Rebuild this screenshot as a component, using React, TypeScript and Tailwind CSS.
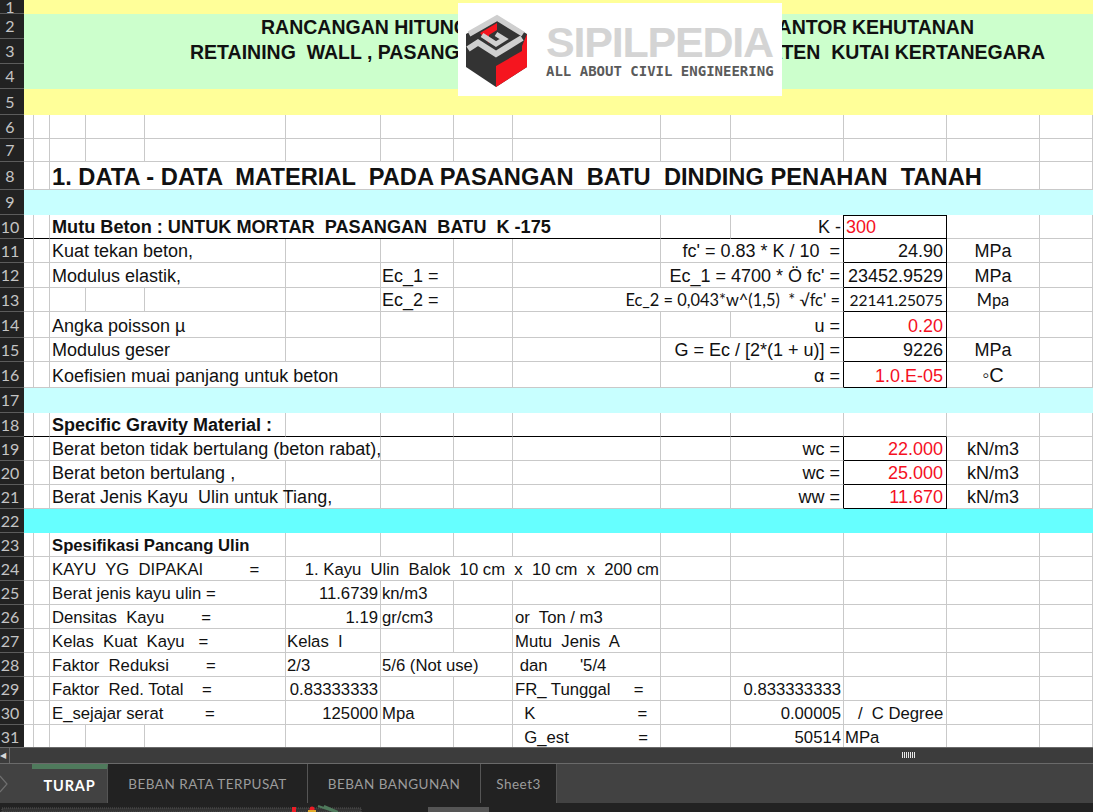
import React from 'react';
import { twMerge } from 'tailwind-merge';

type Cell = [number, string?, string?];

const SPAN: Record<number, string> = {
  1: 'col-span-1', 2: 'col-span-2', 3: 'col-span-3', 4: 'col-span-4', 5: 'col-span-5',
  7: 'col-span-7', 11: 'col-span-11', 12: 'col-span-12', 14: 'col-span-14',
};

const blank = (n: number): Cell[] => Array.from({ length: n }, (): Cell => [1]);

// L column holds the boxed input values
const R = 'justify-end pr-[2px]';
const RED = 'text-[#f5101f]';
const BOX = 'border-r-black border-b-black pr-[3px]';
const UNIT = 'justify-center';
const SM = 'text-[16.7px] leading-[18px]';
const LEFT = 'pl-[2px]';
const KEY = 'justify-end border-r-black pr-[3px]';
const CAL = "font-['Lato',sans-serif]";
const BAND = 'border-transparent';
const UNDER = 'border-b-black';

const boxL = (text: string, cls = ''): Cell => [1, text, `justify-end ${BOX} ${cls}`];
const keyK = (text: string): Cell => [1, text, KEY];

const ROWS: Cell[][] = [
  [[14, '', `bg-[#ffff99] ${BAND}`]],
  [[14, '', `bg-[#ccffcc] ${BAND}`]],
  [[14, '', `bg-[#ccffcc] ${BAND}`]],
  [[14, '', `bg-[#ccffcc] ${BAND}`]],
  [[14, '', `bg-[#ffff99] ${BAND}`]],
  blank(14),
  blank(14),
  [[1], [1], [11, '1. DATA - DATA  MATERIAL  PADA PASANGAN  BATU  DINDING PENAHAN  TANAH', `text-[23.7px] leading-[22px] font-bold ${LEFT}`], [1]],
  [[14, '', `bg-[#c8ffff] ${BAND}`]],
  // row 10
  [
    [1, '', UNDER], [1, '', UNDER],
    [7, 'Mutu Beton : UNTUK MORTAR  PASANGAN  BATU  K -175', `text-[18.15px] leading-[20px] font-bold ${LEFT} ${UNDER}`],
    [1, '', UNDER],
    [1, 'K -', `${R} ${UNDER} border-r-black`],
    [1, '300', `${LEFT} border-t border-t-black border-r-black ${UNDER} ${RED}`],
    [1], [1],
  ],
  [[1], [1], [3, 'Kuat tekan beton,', LEFT], [1], [1], [1], [1], [2, "fc' = 0.83 * K / 10  =", KEY], boxL('24.90'), [1, 'MPa', UNIT], [1]],
  [[1], [1], [3, 'Modulus elastik,', LEFT], [1], [1, 'Ec_1 =', 'pl-[1px]'], [1], [1], [2, "Ec_1 = 4700 * Ö fc' =", KEY], boxL('23452.9529'), [1, 'MPa', UNIT], [1]],
  [[1], [1], [1], [1], [1], [1], [1, 'Ec_2 =', 'pl-[1px]'], [1], [3, "Ec_2 = 0,043*w^(1,5)  * √fc' =", `${KEY} ${CAL} text-[16.4px] leading-[20px]`], boxL('22141.25075', `${CAL} text-[15.5px] leading-[20px]`), [1, 'Mpa', `${UNIT} ${CAL} text-[16.4px] leading-[20px]`], [1]],
  [[1], [1], [3, 'Angka poisson µ', LEFT], [1], [1], [1], [1], [1], keyK('u ='), boxL('0.20', RED), [1], [1]],
  [[1], [1], [3, 'Modulus geser', LEFT], [1], [1], [1], [1], [2, 'G = Ec / [2*(1 + u)] =', KEY], boxL('9226'), [1, 'MPa', UNIT], [1]],
  [[1], [1], [4, 'Koefisien muai panjang untuk beton', LEFT], [1], [1], [1], [1], keyK('α ='), boxL('1.0.E-05', RED), [1, '◦C', `${UNIT} text-[20px] leading-[22px]`], [1]],
  [[14, '', `bg-[#c8ffff] ${BAND}`]],
  // row 18
  [
    [1, '', UNDER], [1, '', UNDER],
    [3, 'Specific Gravity Material :', `font-bold ${LEFT} ${UNDER}`],
    [1, '', UNDER], [1, '', UNDER], [1, '', UNDER], [1, '', UNDER], [1, '', UNDER],
    [1, '', UNDER], [1, '', UNDER],
    [1], [1],
  ],
  [[1], [1], [4, 'Berat beton tidak bertulang (beton rabat),', LEFT], [1], [1], [1], [1], keyK('wc ='), boxL('22.000', RED), [1, 'kN/m3', UNIT], [1]],
  [[1], [1], [3, 'Berat beton bertulang ,', LEFT], [1], [1], [1], [1], [1], keyK('wc ='), boxL('25.000', RED), [1, 'kN/m3', UNIT], [1]],
  [[1], [1], [3, 'Berat Jenis Kayu  Ulin untuk Tiang,', LEFT], [1], [1], [1], [1], [1], keyK('ww ='), boxL('11.670', RED), [1, 'kN/m3', UNIT], [1]],
  [[14, '', `bg-[#66ffff] ${BAND}`]],
  [[1], [1], [3, 'Spesifikasi Pancang Ulin', `font-bold ${LEFT} ${SM}`], ...blank(9)],
  [[1], [1], [3, 'KAYU  YG  DIPAKAI          =', `${LEFT} ${SM}`], [4, '1. Kayu  Ulin  Balok  10 cm  x  10 cm  x  200 cm', `justify-end pr-px ${SM}`], ...blank(5)],
  [[1], [1], [3, 'Berat jenis kayu ulin =', `${LEFT} ${SM}`], [1, '11.6739', `${R} ${SM}`], [1, 'kn/m3', `pl-[1px] ${SM}`], ...blank(7)],
  [[1], [1], [3, 'Densitas  Kayu        =', `${LEFT} ${SM}`], [1, '1.19', `${R} ${SM}`], [1, 'gr/cm3', `pl-[1px] ${SM}`], [1], [1, 'or  Ton / m3', `${LEFT} ${SM}`], ...blank(5)],
  [[1], [1], [3, 'Kelas  Kuat  Kayu   =', `${LEFT} ${SM}`], [1, 'Kelas  I', `pl-[1px] ${SM}`], [1], [1], [1, 'Mutu  Jenis  A', `${LEFT} ${SM}`], ...blank(5)],
  [[1], [1], [3, 'Faktor  Reduksi        =', `${LEFT} ${SM}`], [1, '2/3', `pl-[1px] ${SM}`], [2, '5/6 (Not use)', `pl-[1px] ${SM}`], [1, " dan       '5/4", `${LEFT} ${SM}`], ...blank(5)],
  [[1], [1], [3, 'Faktor  Red. Total    =', `${LEFT} ${SM}`], [1, '0.83333333', `${R} ${SM}`], [1], [1], [1, 'FR_ Tunggal     =', `${LEFT} ${SM}`], [1], [1, '0.833333333', `${R} ${SM}`], ...blank(3)],
  [[1], [1], [3, 'E_sejajar serat         =', `${LEFT} ${SM}`], [1, '125000', `${R} ${SM}`], [1, 'Mpa', `pl-[1px] ${SM}`], [1], [1, '  K                      =', `${LEFT} ${SM}`], [1], [1, '0.00005', `${R} ${SM}`], [1, '   /  C Degree', SM], ...blank(2)],
  [[1], [1], [1], [1], [1], [1], [1], [1], [1, '  G_est               =', `${LEFT} ${SM}`], [1], [1, '50514', `${R} ${SM}`], [1, 'MPa', `pl-[1px] ${SM}`], ...blank(2)],
];

function Logo() {
  return (
    <div className="absolute left-[458px] top-[3px] flex h-[93px] w-[324px] bg-white">
      <svg width="84" height="93" viewBox="0 -1 84 93">
        <polygon points="39,12 69,30 69,63 38,83 8,63 8,30" fill="#333333" />
        <polygon points="38,62 64,47 64,42 69,30 69,63 38,83" fill="#f5151f" />
        <polygon points="22,29 39,19 39,26 31,31 31,39" fill="#f5151f" />
        <polyline points="11,30 39,14 65,30" fill="none" stroke="#cfcfcf" strokeWidth="5.5" />
        <polyline points="10,45 20,38.5 38,50 64,34" fill="none" stroke="#cfcfcf" strokeWidth="6" />
        <polyline points="24,31 38,40 46,35 38,30" fill="none" stroke="#cfcfcf" strokeWidth="5" />
      </svg>
      <div className="pl-[4px] pt-[19px] leading-none">
        <div className="font-['Liberation_Sans',sans-serif] text-[43px] font-bold leading-[40px] tracking-[-1.2px] text-[#d4d4d4]">SIPILPEDIA</div>
        <div className="pt-[2px] font-['DejaVu_Sans_Mono',monospace] text-[14px] font-bold leading-[14px] text-[#5a5a5a]">ALL ABOUT CIVIL ENGINEERING</div>
      </div>
    </div>
  );
}

function SheetTab({ label, className }: { label: string; className: string }) {
  return (
    <div className={twMerge("flex items-center justify-center border-r border-[#555] bg-[#222222] pt-[2px] font-['Lato',sans-serif] text-[13.5px] tracking-[0.5px] text-[#9c9c9c]", className)}>
      {label}
    </div>
  );
}

export default function App() {
  return (
    <div className="relative flex h-[812px] w-[1093px] flex-col overflow-hidden bg-white font-['Liberation_Sans',sans-serif] text-[18px] text-[#111]">
      <div className="grid h-[747px] shrink-0 grid-cols-[24px_10px_16px_36px_59px_141px_95px_73px_59px_148px_70px_113px_103px_93px_53px] grid-rows-[14px_25px_25px_25px_26px_24px_23px_28px_25px_24px_24px_25px_24px_26px_24px_26px_25px_24px_24px_24px_24px_24px_24px_24px_24px_24px_24px_24px_24px_24px_24px] overflow-hidden">
        {ROWS.map((cells, i) => (
          <React.Fragment key={i}>
            <div className="flex items-center border-b border-[#5c5c5c] bg-[#222222] font-['Lato',sans-serif] text-[16px] leading-none text-[#c4c4c4]">
              <span className="w-[20px] text-center">{i + 1}</span>
            </div>
            {cells.map(([span, text, cls], j) => (
              <div
                key={j}
                className={twMerge(
                  'flex items-end whitespace-pre border-r border-b border-[#c9c9c9] pb-px leading-[20px]',
                  SPAN[span],
                  cls,
                )}
              >
                {text}
              </div>
            ))}
          </React.Fragment>
        ))}
      </div>

      {/* titles on the merged band, the logo sits on top of them */}
      <div className="absolute left-[261px] top-[15px] flex h-[25px] w-[713px] items-center justify-between whitespace-pre text-[19.5px] font-bold">
        <span>RANCANGAN HITUNGAN</span>
        <span>KANTOR KEHUTANAN</span>
      </div>
      <div className="absolute left-[190px] top-[40px] flex h-[25px] w-[855px] items-center justify-between whitespace-pre text-[19.5px] font-bold">
        <span>RETAINING  WALL , PASANGAN</span>
        <span>KABUPATEN  KUTAI KERTANEGARA</span>
      </div>
      <Logo />

      {/* horizontal scrollbar */}
      <div className="flex h-[17px] border-y border-[#6a6a6a] bg-[#3c3c3c]">
        <div className="flex w-[10px] items-center border-r border-[#6a6a6a] text-[8px] leading-none text-[#d8d8d8]">◀</div>
        <div className="flex flex-1 items-center justify-end pb-[1px] pr-[178px]">
          <div className="h-[6px] w-[13px] bg-[repeating-linear-gradient(90deg,#e8e8e8_0,#e8e8e8_1px,#3c3c3c_1px,#3c3c3c_2px)]" />
        </div>
      </div>

      {/* sheet tabs */}
      <div className="flex h-[39px] bg-[#424242]">
        <div className="flex w-[32px] items-center">
          <svg width="9" height="18" viewBox="0 0 9 18" fill="none" stroke="#6f6f6f" strokeWidth="1.2">
            <path d="M0 1l7 8-7 8" />
          </svg>
        </div>
        <div className="flex w-[76px] items-center justify-center border-t-[5px] border-r border-t-[#4f7a5c] border-r-[#555] bg-[#424242] pb-[1px] font-['Lato',sans-serif] text-[14.5px] font-bold tracking-[0.8px] text-white">TURAP</div>
        <SheetTab label="BEBAN RATA TERPUSAT" className="w-[200px]" />
        <SheetTab label="BEBAN BANGUNAN" className="w-[173px]" />
        <SheetTab label="Sheet3" className="w-[76px]" />
      </div>

      {/* strip of the desktop below the window */}
      <div className="relative flex h-[9px] bg-[#222222]">
        <svg width="1093" height="9" viewBox="0 0 1093 9">
          <rect x="2" y="5" width="359" height="4" fill="#333" stroke="#555" strokeDasharray="1 1" />
          <rect x="292" y="4" width="4" height="5" fill="#ee1c25" />
          <circle cx="312" cy="6" r="2.5" fill="#ee1c25" />
          <rect x="308" y="7" width="8" height="2" fill="#e0a92a" />
          <path d="M318 3l18 6M324 3l14 6" stroke="#4f7a5c" strokeWidth="2" />
          <rect x="428" y="4" width="61" height="5" fill="#555" />
        </svg>
      </div>
    </div>
  );
}
